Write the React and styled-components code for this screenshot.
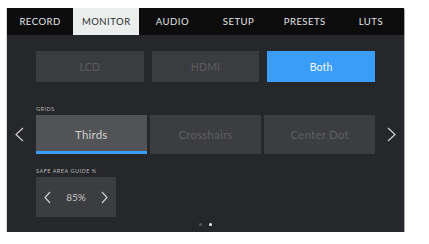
import React from 'react';
import styled, { createGlobalStyle } from 'styled-components';

const GlobalStyle = createGlobalStyle`
  body {
    margin: 0;
    padding: 8px 0 0 7px;
    background: #ffffff;
    font-family: Lato, "Open Sans", sans-serif;
  }
`;

const TABS = ['RECORD', 'MONITOR', 'AUDIO', 'SETUP', 'PRESETS', 'LUTS'];
const OUTPUTS = ['LCD', 'HDMI', 'Both'];
const GRIDS = ['Thirds', 'Crosshairs', 'Center Dot'];

const Chevron = ({ dir = 'left', w = 8, h = 14, color = '#cfcfcf' }) => (
  <svg width={w} height={h} viewBox={`0 0 ${w} ${h}`}>
    <polyline
      points={dir === 'left'
        ? `${w - 1},1 1,${h / 2} ${w - 1},${h - 1}`
        : `1,1 ${w - 1},${h / 2} 1,${h - 1}`}
      fill="none"
      stroke={color}
      strokeWidth="1.2"
    />
  </svg>
);

const App = () => {
  return <>
    <GlobalStyle />
    <Screen>
      <TabBar>
        {TABS.map(t => <Tab key={t} active={t === 'MONITOR'}>{t}</Tab>)}
      </TabBar>
      <Body>
        <span />
        <OutputRow>
          {OUTPUTS.map(o => <OutputButton key={o} active={o === 'Both'}>{o}</OutputButton>)}
        </OutputRow>
        <span />

        <span />
        <Label top={24}>Grids</Label>
        <span />

        <SideArrow side="left"><Chevron dir="left" w={9} h={15} /></SideArrow>
        <GridRow>
          {GRIDS.map(g => <GridButton key={g} active={g === 'Thirds'}>{g}</GridButton>)}
        </GridRow>
        <SideArrow side="right"><Chevron dir="right" w={9} h={15} /></SideArrow>

        <span />
        <Label top={14}>Safe Area Guide %</Label>
        <span />

        <span />
        <Stepper>
          <Chevron dir="left" w={7} h={13} />
          <StepValue>85%</StepValue>
          <Chevron dir="right" w={7} h={13} />
        </Stepper>
        <span />
      </Body>
      <Dots>
        <Dot />
        <Dot active />
      </Dots>
    </Screen>
  </>;
};

const Screen = styled.div`
  width: 397px;
  height: 224px;
  background: #26272b;
  box-shadow: 1px 1px 0 #a9a9a9, -1px 0 0 #d8d8d8;
  display: flex;
  flex-direction: column;
  overflow: hidden;
`;

const TabBar = styled.div`
  display: grid;
  grid-template-columns: repeat(6, 1fr);
  height: 27px;
  background: #0c0c0d;
`;

const Tab = styled.div`
  display: flex;
  align-items: center;
  justify-content: center;
  font-size: 9.5px;
  letter-spacing: 0.5px;
  color: ${p => p.active ? '#2c2d30' : '#e6e6e6'};
  background: ${p => p.active ? '#eceeee' : 'transparent'};
`;

const Body = styled.div`
  display: grid;
  grid-template-columns: 29px 339px 29px;
  padding-top: 16px;
`;

const OutputRow = styled.div`
  display: grid;
  grid-template-columns: repeat(3, 1fr);
  gap: 8px;
`;

const OutputButton = styled.div`
  height: 31px;
  display: flex;
  align-items: center;
  justify-content: center;
  font-size: 10.5px;
  letter-spacing: 0.2px;
  background: ${p => p.active ? '#3a9df7' : '#3b3c40'};
  color: ${p => p.active ? '#f4f8fc' : '#5c5d61'};
`;

const Label = styled.div`
  margin-top: ${p => p.top}px;
  margin-bottom: 3px;
  font-size: 5.5px;
  line-height: 6px;
  letter-spacing: 0.5px;
  text-transform: uppercase;
  color: #b9b9b9;
`;

const SideArrow = styled.div`
  display: flex;
  align-items: center;
  justify-content: center;
  padding-right: ${p => p.side === 'left' ? 4 : 0}px;
  padding-left: ${p => p.side === 'right' ? 4 : 0}px;
`;

const GridRow = styled.div`
  display: grid;
  grid-template-columns: repeat(3, 1fr);
  gap: 3.5px;
`;

const GridButton = styled.div`
  height: 39px;
  box-sizing: border-box;
  display: flex;
  align-items: center;
  justify-content: center;
  font-size: 11.5px;
  letter-spacing: 0.2px;
  background: ${p => p.active ? '#525357' : '#3c3d41'};
  color: ${p => p.active ? '#cfcfcf' : '#5e5f63'};
  border-bottom: 3px solid ${p => p.active ? '#3a9df7' : 'transparent'};
  padding-top: 3px;
`;

const Stepper = styled.div`
  width: 80px;
  height: 40px;
  box-sizing: border-box;
  background: #3c3d41;
  display: flex;
  align-items: center;
  justify-content: space-between;
  padding: 0 8px;
`;

const StepValue = styled.span`
  font-size: 10px;
  color: #c4c4c4;
`;

const Dots = styled.div`
  display: flex;
  justify-content: center;
  gap: 7px;
  margin-top: 6px;
`;

const Dot = styled.span`
  width: 3px;
  height: 3px;
  border-radius: 50%;
  background: ${p => p.active ? '#f2f2f2' : '#55565a'};
`;

export default App;
